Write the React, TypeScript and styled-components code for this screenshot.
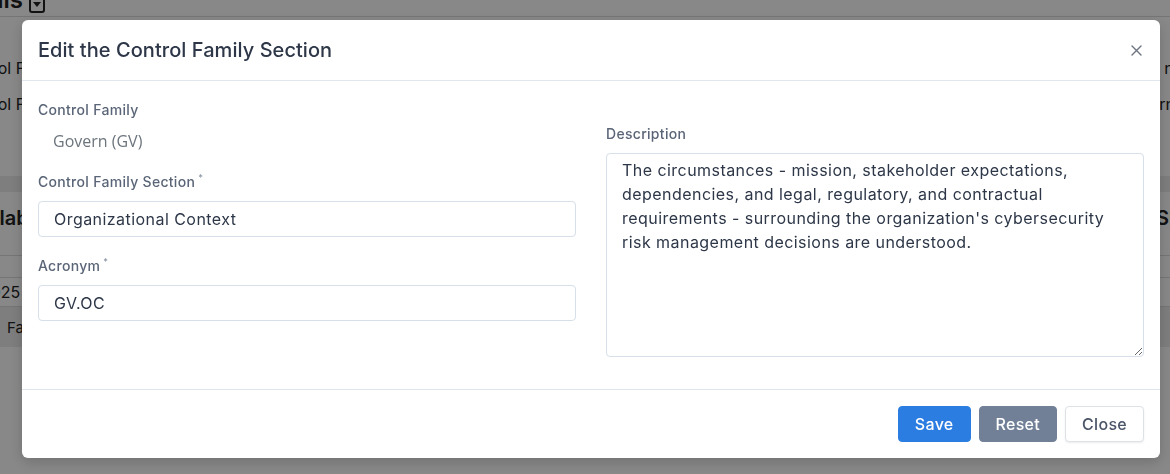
import { FC } from 'react';
import styled, { createGlobalStyle } from 'styled-components';

const GlobalStyle = createGlobalStyle`
    html, body {
        margin: 0;
        padding: 0;
        width: 1170px;
        height: 474px;
        overflow: hidden;
        background: #ffffff;
        font-family: 'Inter', 'Liberation Sans', sans-serif;
    }
    * {
        box-sizing: border-box;
    }
`;

// ---------- page behind the modal ----------

const Page = styled.div`
    width: 1170px;
    height: 474px;
    overflow: hidden;
    display: flex;
    flex-direction: column;
    color: #222;
`;

const PageTitle = styled.div`
    display: flex;
    align-items: center;
    gap: 6px;
    height: 35px;
    margin-top: -18px;
    margin-left: -230px;
    border-bottom: 1px solid #dcdcdc;
    font-size: 24px;
    font-weight: 600;
    white-space: nowrap;
`;

const CaretBox = styled.span`
    display: inline-flex;
    align-items: center;
    justify-content: center;
    width: 16px;
    height: 16px;
    margin-top: 12px;
    border: 2px solid #222;
    border-radius: 3px;
`;

const BgRow = styled.div<{ $h: number; $shade?: boolean; $line?: boolean; $size?: number; $bold?: boolean }>`
    display: flex;
    justify-content: space-between;
    align-items: center;
    flex-shrink: 0;
    height: ${(p) => p.$h}px;
    background: ${(p) => (p.$shade ? '#ececec' : 'transparent')};
    border-bottom: ${(p) => (p.$line ? '1px solid #dcdcdc' : 'none')};
    font-size: ${(p) => p.$size ?? 16}px;
    font-weight: ${(p) => (p.$bold ? 600 : 400)};
    white-space: nowrap;
`;

const BgLeft = styled.span<{ $shift: number }>`
    margin-left: ${(p) => p.$shift}px;
`;

const BgRight = styled.span<{ $shift: number }>`
    margin-right: ${(p) => p.$shift}px;
`;

const Backdrop = styled.div`
    position: fixed;
    inset: 0;
    background: rgba(0, 0, 0, 0.467);
`;

// ---------- modal ----------

const Modal = styled.div`
    position: fixed;
    left: 22px;
    top: 20px;
    width: 1138px;
    background: #ffffff;
    border-radius: 6px;
    box-shadow: 0 4px 14px rgba(0, 0, 0, 0.18);
    display: flex;
    flex-direction: column;
`;

const Header = styled.div`
    display: flex;
    align-items: center;
    justify-content: space-between;
    height: 61px;
    padding: 0 16px;
    border-bottom: 1px solid #dfe6ee;
`;

const Title = styled.h5`
    margin: 0;
    font-size: 20px;
    font-weight: 500;
    color: #2d3748;
    letter-spacing: 0.05px;
`;

const CloseX = styled.button`
    display: flex;
    align-items: center;
    justify-content: center;
    width: 20px;
    height: 20px;
    padding: 0;
    margin-right: -2px;
    border: none;
    background: transparent;
    color: #6b7280;
    cursor: pointer;
`;

const Body = styled.div`
    display: grid;
    grid-template-columns: 1fr 1fr;
    column-gap: 30px;
    align-items: start;
    padding: 19px 16px 32px;
    border-bottom: 1px solid #dfe6ee;
`;

const Column = styled.div<{ $offset?: number }>`
    display: flex;
    flex-direction: column;
    padding-top: ${(p) => p.$offset ?? 0}px;
`;

const Label = styled.label`
    display: block;
    height: 20px;
    line-height: 20px;
    margin-bottom: 9px;
    font-size: 14px;
    font-weight: 500;
    color: #5a6577;
    letter-spacing: 0.3px;
`;

const Req = styled.sup`
    margin-left: 3px;
    font-size: 9px;
    line-height: 0;
    color: #8a94a3;
    vertical-align: 6px;
`;

const StaticValue = styled.div`
    height: 24px;
    line-height: 24px;
    margin-bottom: 19px;
    padding-left: 15px;
    font-family: 'Open Sans', 'Noto Sans', sans-serif;
    font-size: 16px;
    color: #6c757d;
`;

const Input = styled.input`
    height: 36px;
    margin-bottom: 19px;
    padding: 0 15px;
    border: 1px solid #d7dfe9;
    border-radius: 4px;
    font-family: inherit;
    font-size: 16px;
    color: #2d3748;
    letter-spacing: 0.45px;
    outline: none;
    &:last-child {
        margin-bottom: 0;
    }
`;

const TextArea = styled.textarea`
    height: 204px;
    padding: 4px 15px;
    border: 1px solid #d7dfe9;
    border-radius: 4px;
    font-family: inherit;
    font-size: 16px;
    line-height: 24px;
    color: #2d3748;
    letter-spacing: 0.45px;
    resize: vertical;
    outline: none;
`;

const Footer = styled.div`
    display: flex;
    justify-content: flex-end;
    gap: 8px;
    padding: 16px;
`;

const Button = styled.button<{ $variant: 'primary' | 'secondary' | 'light' }>`
    height: 36px;
    padding: 0 16px;
    border-radius: 4px;
    font-family: inherit;
    font-size: 16px;
    font-weight: 500;
    letter-spacing: 0.3px;
    cursor: pointer;
    border: 1px solid
        ${(p) => (p.$variant === 'primary' ? '#2b7de1' : p.$variant === 'secondary' ? '#718096' : '#dee2e6')};
    background: ${(p) => (p.$variant === 'primary' ? '#2b7de1' : p.$variant === 'secondary' ? '#718096' : '#ffffff')};
    color: ${(p) => (p.$variant === 'light' ? '#4a5568' : '#ffffff')};
    box-shadow: ${(p) => (p.$variant === 'light' ? '0 1px 2px rgba(0,0,0,0.08)' : 'none')};
`;

const description =
    "The circumstances - mission, stakeholder expectations, dependencies, and legal, regulatory, and contractual requirements - surrounding the organization's cybersecurity risk management decisions are understood.";

const App: FC = () => {
    return (
        <>
            <GlobalStyle />
            <Page>
                <PageTitle>
                    Control Family Details
                    <CaretBox>
                        <svg width='8' height='6' viewBox='0 0 8 6'>
                            <path d='M0 0h8L4 5z' fill='#222' />
                        </svg>
                    </CaretBox>
                </PageTitle>
                <BgRow $h={33} />
                <BgRow $h={36}>
                    <BgLeft $shift={-44}>Control Family</BgLeft>
                    <BgRight $shift={-36}>name</BgRight>
                </BgRow>
                <BgRow $h={36}>
                    <BgLeft $shift={-44}>Control Family</BgLeft>
                    <BgRight $shift={-28}>governing</BgRight>
                </BgRow>
                <BgRow $h={54} />
                <BgRow $h={16} $shade />
                <BgRow $h={52} $size={20} $bold>
                    <BgLeft $shift={-42}>Available</BgLeft>
                    <BgRight $shift={-40}>Show</BgRight>
                </BgRow>
                <BgRow $h={12} $line />
                <BgRow $h={22} $line />
                <BgRow $h={29} $line>
                    <BgLeft $shift={-19}>2025</BgLeft>
                </BgRow>
                <BgRow $h={40} $shade $size={15}>
                    <BgLeft $shift={7}>Family</BgLeft>
                </BgRow>
                <BgRow $h={120} $size={15}>
                    <BgLeft $shift={672}>strategy</BgLeft>
                </BgRow>
            </Page>
            <Backdrop />
            <Modal role='dialog'>
                <Header>
                    <Title>Edit the Control Family Section</Title>
                    <CloseX aria-label='Close'>
                        <svg width='11' height='11' viewBox='0 0 11 11'>
                            <path d='M1 1l9 9M10 1l-9 9' stroke='currentColor' strokeWidth='1.4' strokeLinecap='round' />
                        </svg>
                    </CloseX>
                </Header>
                <Body>
                    <Column>
                        <Label>Control Family</Label>
                        <StaticValue>Govern (GV)</StaticValue>
                        <Label>
                            Control Family Section<Req>*</Req>
                        </Label>
                        <Input defaultValue='Organizational Context' />
                        <Label>
                            Acronym<Req>*</Req>
                        </Label>
                        <Input defaultValue='GV.OC' />
                    </Column>
                    <Column $offset={24}>
                        <Label>Description</Label>
                        <TextArea defaultValue={description} />
                    </Column>
                </Body>
                <Footer>
                    <Button $variant='primary'>Save</Button>
                    <Button $variant='secondary'>Reset</Button>
                    <Button $variant='light'>Close</Button>
                </Footer>
            </Modal>
        </>
    );
};

export default App;
